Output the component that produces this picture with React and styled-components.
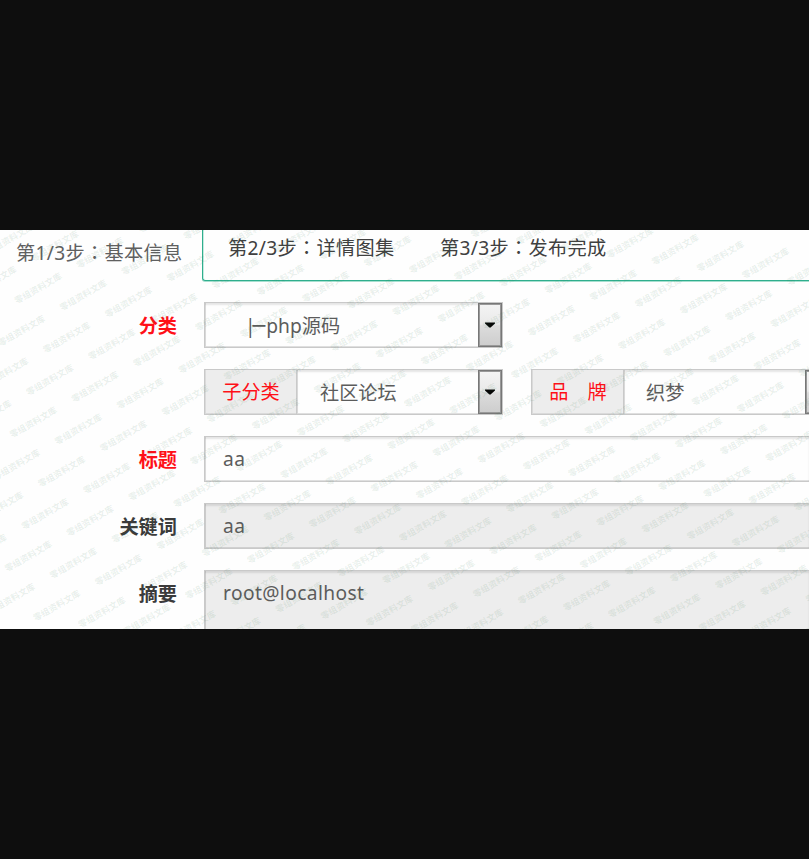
import React from "react";
import styled, { createGlobalStyle } from "styled-components";

const GlobalStyle = createGlobalStyle`
  html, body { margin: 0; padding: 0; background: #0e0e0e; overflow: hidden; }
  *, *::before, *::after { box-sizing: border-box; }
`;

const Page = styled.main`
  width: 809px;
  height: 859px;
  padding-top: 230px;
  overflow: hidden;
  background: #0e0e0e;
  font-family: "Noto Sans", "Noto Sans CJK SC", sans-serif;
  font-size: 19.2px;
  line-height: 28px;
  color: #5c5c5c;
  white-space: nowrap;
`;

const Panel = styled.section`
  position: relative;
  height: 399px;
  overflow: hidden;
  background: #fefefe;
`;

const TabBar = styled.nav`
  display: flex;
  height: 52px;
  letter-spacing: 0.32px;
`;

const ActiveTab = styled.div`
  width: 202px;
  padding: 8px 0 0 16px;
  color: #606060;
`;

const TabStrip = styled.div`
  flex: 1;
  display: flex;
  gap: 46px;
  height: 51px;
  padding: 3px 0 0 25px;
  border-left: 1px solid #2fae8d;
  border-bottom: 1px solid #2fae8d;
  border-bottom-left-radius: 3px;
  box-shadow: 0 1px 0 #a6dfcf, inset 1px 0 0 #c5eae0;
  color: #404040;
`;

const Tab = styled.div`
  width: 166px;
`;

const Colon = styled.span`
  font-family: "Noto Sans CJK TC", sans-serif;
`;

const Form = styled.form`
  display: flex;
  flex-direction: column;
  gap: 21px;
  padding-top: 20px;
`;

const Row = styled.div`
  display: grid;
  grid-template-columns: 178px 1fr;
  column-gap: 26px;
  height: ${(p) => p.$height || 46}px;
`;

const Label = styled.label`
  padding: 10px 1px 0 0;
  text-align: right;
  font-weight: 700;
  color: ${(p) => (p.$required ? "#ff1018" : "#3b3b3b")};
`;

const Controls = styled.div`
  display: flex;
  gap: 28px;
`;

const Field = styled.div`
  flex: 1;
  padding: 8px 18px;
  letter-spacing: 0.38px;
  border: 1px solid #c9c9c9;
  border-right: 0;
  background: ${(p) => (p.$readOnly ? "#ededed" : "#fefefe")};
  box-shadow: inset 0 2px 2px rgba(0, 0, 0, 0.1), inset 1px -1px 0 rgba(0, 0, 0, 0.12);
`;

const Group = styled.div`
  display: flex;
  flex: none;
  width: 299px;
  height: 46px;
`;

const Addon = styled.div`
  width: 92px;
  padding: 8px 0 0 1px;
  text-align: center;
  border: 1px solid #c9c9c9;
  box-shadow: inset 1px -1px 0 rgba(0, 0, 0, 0.08);
  border-right: 0;
  background: #ededed;
  color: #ff1018;
`;

const Select = styled.div`
  flex: 1;
  display: flex;
  justify-content: space-between;
  padding-left: ${(p) => p.$indent}px;
  border: 1px solid #c9c9c9;
  background: #fefefe;
  box-shadow: inset 0 2px 2px rgba(0, 0, 0, 0.1), inset 1px -1px 0 rgba(0, 0, 0, 0.12);
`;

const Value = styled.span`
  padding-top: 9px;
`;

const Branch = styled.span`
  font-family: "DejaVu Sans Mono", monospace;
  font-size: 21px;
  line-height: 20px;
  letter-spacing: 1px;
`;

const Stem = styled.span`
  letter-spacing: -3px;
`;

const Arrow = styled.span`
  display: flex;
  align-items: center;
  justify-content: center;
  width: 24px;
  height: 44px;
  border: 1px solid #777;
  outline: 1px solid #999;
  outline-offset: -2px;
  background: linear-gradient(#f4f4f4, #e9e9e9 48%, #dcdcdc 52%, #cdcdcd);
`;

const WatermarkLayer = styled.svg`
  position: absolute;
  inset: 0;
  pointer-events: none;
  font-family: "Noto Sans CJK SC", sans-serif;
  font-size: 8.8px;
  font-weight: 700;
  fill: rgba(45, 110, 75, 0.11);
`;

const DropButton = () => (
  <Arrow>
    <svg width="10" height="6" viewBox="0 0 10 6">
      <path d="M0 0.5H10V1.4L5.6 5.6H4.4L0 1.4Z" fill="#050505" />
    </svg>
  </Arrow>
);

const marks = [];
for (let row = -3; row < 13; row++) {
  for (let col = -4; col < 26; col++) {
    const x = 19 + 45.15 * col - 16.7 * row;
    const y = 69.3 + 6.8 * col + 42.4 * row;
    if (x > -42 && x < 811 && y > -4 && y < 422) marks.push([x, y]);
  }
}

const Watermark = () => (
  <WatermarkLayer width="809" height="399" aria-hidden="true">
    {marks.map(([x, y]) => (
      <text key={`${x},${y}`} transform={`translate(${x} ${y}) rotate(-30)`} x="-4.4" y="3.3">
        零组资料文库
      </text>
    ))}
  </WatermarkLayer>
);

const Step = ({ n, children }) => (
  <>第{n}/3步<Colon>：</Colon>{children}</>
);

export default function App() {
  return (
    <Page>
      <GlobalStyle />
      <Panel>
        <TabBar>
          <ActiveTab><Step n={1}>基本信息</Step></ActiveTab>
          <TabStrip>
            <Tab><Step n={2}>详情图集</Step></Tab>
            <Tab><Step n={3}>发布完成</Step></Tab>
          </TabStrip>
        </TabBar>
        <Form>
          <Row>
            <Label $required>分类</Label>
            <Controls>
              <Group>
                <Select $indent={40}>
                  <Value><Stem>|</Stem><Branch>─</Branch>php源码</Value>
                  <DropButton />
                </Select>
              </Group>
            </Controls>
          </Row>
          <Row>
            <span />
            <Controls>
              <Group>
                <Addon>子分类</Addon>
                <Select $indent={23}><Value>社区论坛</Value><DropButton /></Select>
              </Group>
              <Group>
                <Addon>品　牌</Addon>
                <Select $indent={22}><Value>织梦</Value><DropButton /></Select>
              </Group>
            </Controls>
          </Row>
          <Row>
            <Label $required>标题</Label>
            <Field>aa</Field>
          </Row>
          <Row>
            <Label>关键词</Label>
            <Field $readOnly>aa</Field>
          </Row>
          <Row $height={90}>
            <Label>摘要</Label>
            <Field $readOnly>root@localhost</Field>
          </Row>
        </Form>
        <Watermark />
      </Panel>
    </Page>
  );
}
